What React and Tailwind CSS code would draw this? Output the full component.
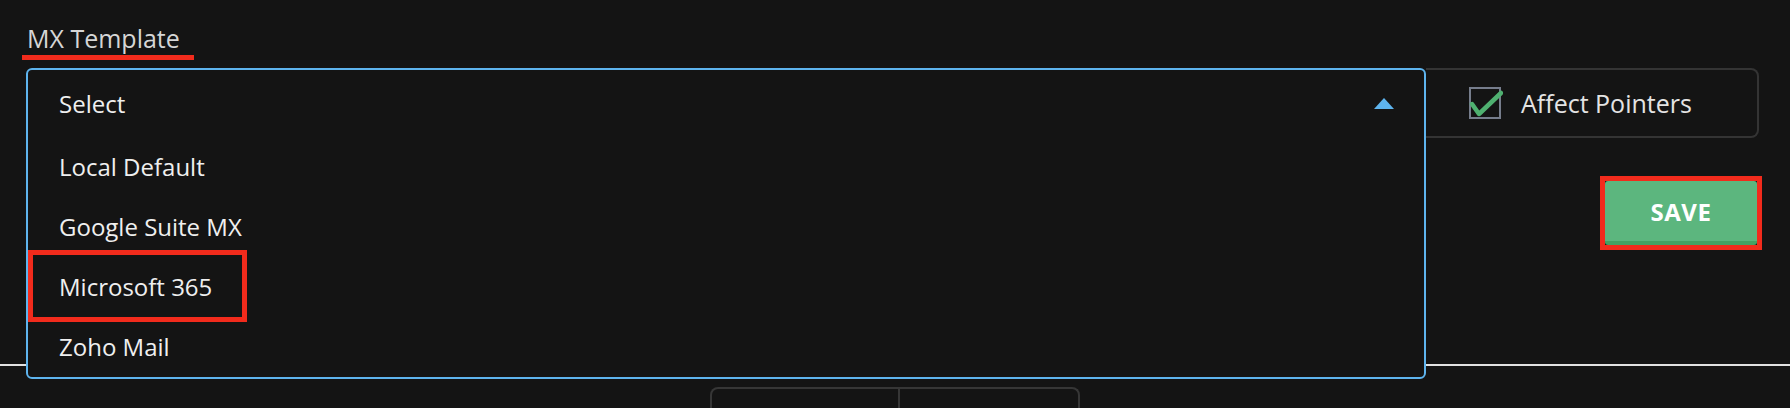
import { useState } from "react";

const options = ["Local Default", "Google Suite MX", "Microsoft 365", "Zoho Mail"];

export default function App() {
  const [affect, setAffect] = useState(true);

  return (
    <div
      className="h-[408px] w-full overflow-hidden bg-[#141414] text-[#efefef]"
      style={{ fontFamily: '"Open Sans", "Noto Sans", sans-serif' }}
    >
      {/* Form section */}
      <div className="h-[366px] border-b-2 border-[#e2e2e2] pt-[22px]">
        <div className="relative ml-[27px] w-fit text-[25px] leading-[32px] text-[#d6d6d6]">
          MX Template
          <span className="absolute left-[-5px] top-[33px] h-[5px] w-[172px] bg-[#f22b1c]" />
        </div>

        <div className="mt-[14px] flex pl-[26px] pr-[31px]">
          {/* Open select */}
          <div className="relative h-[70px] w-[1400px] shrink-0">
            <div className="absolute inset-x-0 top-0 z-10 rounded-[6px] border-2 border-[#5eb4ee] bg-[#141414]">
              <div className="flex h-[67px] items-center pl-[31px] pr-[30px] text-[24px] leading-[32px]">
                <span>Select</span>
                <svg className="ml-auto" width="20" height="11" viewBox="0 0 20 11">
                  <polygon points="10,0 20,11 0,11" fill="#5eb4ee" />
                </svg>
              </div>
              <div className="relative">
                {options.map((opt) => (
                  <div
                    key={opt}
                    className="flex h-[60px] items-center pl-[31px] text-[24px] leading-[32px]"
                  >
                    {opt}
                  </div>
                ))}
                {/* highlight annotation */}
                <div className="absolute left-0 top-[113px] h-[72px] w-[219px] border-[5px] border-[#f22b1c]" />
              </div>
            </div>
          </div>

          {/* Affect Pointers */}
          <div className="flex h-[70px] flex-1 items-center gap-[20px] rounded-r-[8px] border-2 border-l-0 border-[#343434] pl-[43px]">
            <button
              onClick={() => setAffect(!affect)}
              className="relative h-[32px] w-[32px] border-2 border-[#767d8c]"
            >
              {affect && (
                <svg
                  className="absolute left-[-2px] top-[-2px]"
                  width="34"
                  height="34"
                  viewBox="0 0 34 34"
                >
                  <polyline
                    points="3,17 10,27 32,6"
                    fill="none"
                    stroke="#4fb070"
                    strokeWidth="4.5"
                    strokeLinecap="round"
                    strokeLinejoin="round"
                  />
                </svg>
              )}
            </button>
            <span className="text-[25px] leading-[32px] text-[#e4e4e4]">Affect Pointers</span>
          </div>
        </div>

        <div className="mt-[38px] flex justify-end pr-[28px]">
          <div className="border-[5px] border-[#f22b1c]">
            <button className="flex h-[64px] w-[152px] items-center justify-center rounded-[3px] border-b-4 border-[#45a163] bg-[#5cb67e] pt-[2px] text-[24px] font-bold tracking-[0.5px] text-white">
              SAVE
            </button>
          </div>
        </div>
      </div>

      {/* Tab group (cut off) */}
      <div className="mx-auto mt-[21px] flex h-[60px] w-[370px] rounded-t-[8px] border-2 border-b-0 border-[#363636]">
        <div className="w-[188px] border-r-2 border-[#363636]" />
        <div className="flex-1" />
      </div>
    </div>
  );
}
